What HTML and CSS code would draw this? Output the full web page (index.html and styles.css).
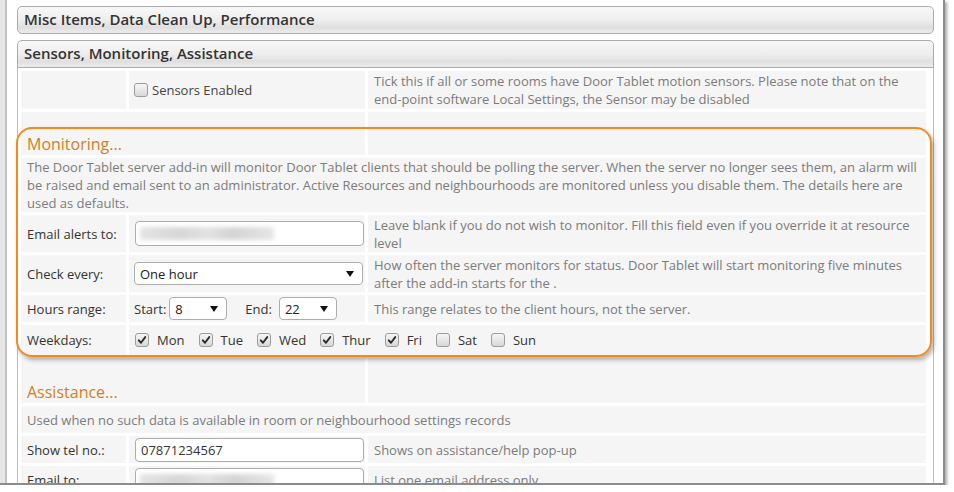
FILE: index.html
```html
<!DOCTYPE html>
<html lang="en">
<head>
    <meta charset="UTF-8">
    <title>Sensors, Monitoring, Assistance</title>
    <link rel="stylesheet" href="styles.css">
</head>
<body>
    <div class="window">
        <div class="gutter"></div>
        <div class="page">
            <div class="bar">Misc Items, Data Clean Up, Performance</div>

            <div class="panel">
                <div class="bar bar-open">Sensors, Monitoring, Assistance</div>
                <div class="panel-body">
                    <table class="grid">
                        <colgroup>
                            <col class="c-label">
                            <col class="c-ctl">
                            <col class="c-note">
                        </colgroup>
                        <tr class="r-sensors">
                            <td></td>
                            <td class="ctl">
                                <label class="sensor"><span class="cb"></span>Sensors Enabled</label>
                            </td>
                            <td class="note">Tick this if all or some rooms have Door Tablet motion sensors. Please note that on the end-point software Local Settings, the Sensor may be disabled</td>
                        </tr>

                        <!-- Monitoring -->
                        <tr class="r-title">
                            <td colspan="2" class="section">Monitoring...</td>
                            <td></td>
                        </tr>
                        <tr class="r-desc">
                            <td colspan="3" class="note">The Door Tablet server add-in will monitor Door Tablet clients that should be polling the server. When the server no longer sees them, an alarm will be raised and email sent to an administrator. Active Resources and neighbourhoods are monitored unless you disable them. The details here are used as defaults.</td>
                        </tr>
                        <tr class="r-email">
                            <td>Email alerts to:</td>
                            <td class="ctl"><div class="field"><span class="blur"></span></div></td>
                            <td class="note">Leave blank if you do not wish to monitor. Fill this field even if you override it at resource level</td>
                        </tr>
                        <tr class="r-check">
                            <td>Check every:</td>
                            <td class="ctl">
                                <span class="sel-wrap"><select class="sel sel-wide"><option>One hour</option></select></span>
                            </td>
                            <td class="note">How often the server monitors for status. Door Tablet will start monitoring five minutes after the add-in starts for the .</td>
                        </tr>
                        <tr class="r-hours">
                            <td>Hours range:</td>
                            <td class="ctl">
                                <div class="range">
                                    <span>Start:</span>
                                    <span class="sel-wrap start"><select class="sel sel-small"><option>8</option></select></span>
                                    <span class="end-label">End:</span>
                                    <span class="sel-wrap end"><select class="sel sel-small"><option>22</option></select></span>
                                </div>
                            </td>
                            <td class="note">This range relates to the client hours, not the server.</td>
                        </tr>
                        <tr class="r-week">
                            <td>Weekdays:</td>
                            <td colspan="2" class="ctl">
                                <div class="days">
                                    <span class="day"><span class="cb on"><svg viewBox="0 0 14 14"><path d="M3.2 7.4 L5.8 10.2 L10.8 3.6"/></svg></span>Mon</span>
                                    <span class="day"><span class="cb on"><svg viewBox="0 0 14 14"><path d="M3.2 7.4 L5.8 10.2 L10.8 3.6"/></svg></span>Tue</span>
                                    <span class="day"><span class="cb on"><svg viewBox="0 0 14 14"><path d="M3.2 7.4 L5.8 10.2 L10.8 3.6"/></svg></span>Wed</span>
                                    <span class="day"><span class="cb on"><svg viewBox="0 0 14 14"><path d="M3.2 7.4 L5.8 10.2 L10.8 3.6"/></svg></span>Thur</span>
                                    <span class="day"><span class="cb on"><svg viewBox="0 0 14 14"><path d="M3.2 7.4 L5.8 10.2 L10.8 3.6"/></svg></span>Fri</span>
                                    <span class="day"><span class="cb"></span>Sat</span>
                                    <span class="day"><span class="cb"></span>Sun</span>
                                </div>
                            </td>
                        </tr>

                        <!-- Assistance -->
                        <tr class="r-title2">
                            <td colspan="2" class="section">Assistance...</td>
                            <td></td>
                        </tr>
                        <tr class="r-line">
                            <td colspan="3" class="note">Used when no such data is available in room or neighbourhood settings records</td>
                        </tr>
                        <tr class="r-line">
                            <td>Show tel no.:</td>
                            <td class="ctl"><input class="field" type="text" value="07871234567"></td>
                            <td class="note">Shows on assistance/help pop-up</td>
                        </tr>
                        <tr class="r-line">
                            <td>Email to:</td>
                            <td class="ctl"><div class="field"><span class="blur"></span></div></td>
                            <td class="note">List one email address only</td>
                        </tr>
                    </table>

                    <!-- orange callout round the monitoring block -->
                    <div class="callout"></div>
                </div>
            </div>
        </div>
    </div>
</body>
</html>
```

FILE: styles.css
```css
body {
    margin: 0;
    background: #fff;
    font-family: "Open Sans", "DejaVu Sans", sans-serif;
    font-size: 13px;
    color: #333;
}
.window {
    width: 943px;
    height: 483px;
    display: flex;
    background: #fff;
    border-right: 2px solid #8c8c8c;
    border-bottom: 2px solid #8c8c8c;
    box-shadow: 2px 2px 3px rgba(0, 0, 0, 0.35);
    overflow: hidden;
}
.gutter {
    flex: none;
    width: 5px;
    background: #e6e6e6;
    border-right: 2px solid #c2c2c2;
}
.page {
    flex: 1;
    padding: 6px 9px 0 10px;
}

/* accordion bars */
.bar {
    height: 28px;
    box-sizing: border-box;
    border: 1px solid #ababab;
    border-radius: 5px;
    background: linear-gradient(#f8f8f8, #eeeeee 50%, #dfdfdf 78%, #ececec);
    font-weight: 600;
    font-size: 15px;
    line-height: 24px;
    color: #333;
    padding-left: 6px;
    margin-bottom: 6px;
}
.bar-open {
    border-radius: 5px 5px 0 0;
    margin-bottom: 0;
}
.panel-body {
    position: relative;
    border: 1px solid #bdbdbd;
    border-top: none;
}

/* settings table */
.grid {
    border-spacing: 3px;
    table-layout: fixed;
    width: 911px;
}
.c-label { width: 105px; }
.c-ctl { width: 236px; }
.c-note { width: 558px; }
.grid td {
    background: #f5f5f5;
    padding: 0 6px;
    vertical-align: middle;
    line-height: 18px;
    color: #333;
}
.grid td.ctl {
    padding: 0 1px 0 6px;
}
.grid td.note {
    color: #7b7b7b;
}
.grid td.section {
    vertical-align: bottom;
    color: #d27f1c;
    font-size: 16px;
    line-height: 22px;
}
.r-sensors td { height: 38px; }
.r-title td { height: 43px; }
.r-desc td { height: 54px; }
.r-email td { height: 37px; }
.r-check td { height: 37px; }
.r-hours td { height: 27px; }
.r-week td { height: 30px; }
.r-title2 td { height: 45px; }
.r-line td { height: 27px; }

/* form controls */
.field {
    display: block;
    width: 229px;
    height: 25px;
    box-sizing: border-box;
    border: 1px solid #adadad;
    border-radius: 4px;
    background: #fff;
    font-family: inherit;
    font-size: 13px;
    color: #333;
    padding: 0 5px;
    position: relative;
}
.r-line .field {
    height: 24px;
}
.blur {
    position: absolute;
    left: 4px;
    top: 5px;
    width: 134px;
    height: 13px;
    background: linear-gradient(90deg, #e4e4e4, #d6d6d6 30%, #e2e2e2 50%, #d4d4d4 70%, #e6e6e6);
    filter: blur(2px);
}
.sel-wrap {
    position: relative;
    display: inline-block;
}
.sel-wrap::after {
    content: "";
    position: absolute;
    right: 9px;
    top: 9px;
    border-left: 4px solid transparent;
    border-right: 4px solid transparent;
    border-top: 6px solid #111;
}
.sel {
    appearance: none;
    -webkit-appearance: none;
    height: 23px;
    box-sizing: border-box;
    border: 1px solid #adadad;
    border-radius: 4px;
    background: #fff;
    font-family: inherit;
    font-size: 13px;
    color: #222;
    padding: 0 5px;
    display: block;
}
.sel-wide { width: 229px; margin-left: -1px; }
.sel-small { width: 58px; }
.range {
    display: flex;
    align-items: center;
    margin-left: -1px;
}
.range .start { margin-left: 3px; }
.range .end-label { margin-left: 18px; }
.range .end { margin-left: 7px; }

/* checkboxes */
.cb {
    flex: none;
    display: inline-block;
    width: 14px;
    height: 14px;
    box-sizing: border-box;
    border: 1px solid #9c9c9c;
    border-radius: 3px;
    background: linear-gradient(#f6f6f6, #d8d8d8);
    vertical-align: middle;
}
.cb svg {
    display: block;
    width: 12px;
    height: 12px;
}
.cb svg path {
    fill: none;
    stroke: #2b2b2b;
    stroke-width: 2.2;
    stroke-linecap: round;
    stroke-linejoin: round;
}
.sensor {
    display: flex;
    align-items: center;
    gap: 4px;
    margin-left: -1px;
    color: #444;
}
.days {
    display: flex;
    align-items: center;
    gap: 14px;
}
.day {
    display: flex;
    align-items: center;
    gap: 8px;
}

/* annotation round the monitoring block */
.callout {
    position: absolute;
    left: -2px;
    top: 59px;
    width: 912px;
    height: 226px;
    border: 2px solid #f38a1d;
    border-radius: 16px;
    box-shadow: 2px 3px 4px rgba(0, 0, 0, 0.3);
    pointer-events: none;
}
```
